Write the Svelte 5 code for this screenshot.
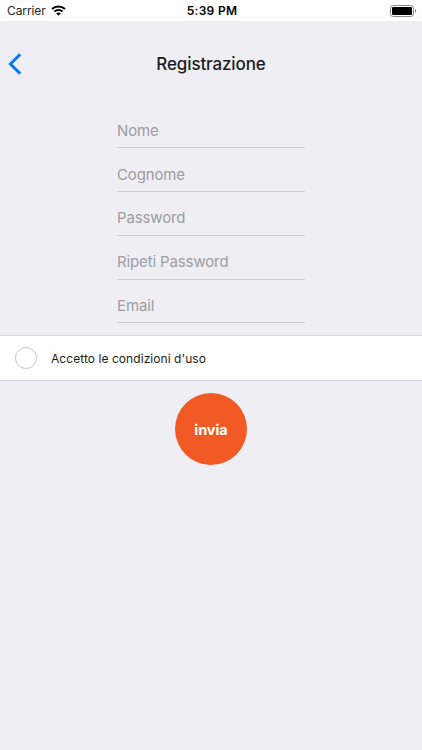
<script lang="ts">
	type Field = { name: string; label: string; type: 'text' | 'password' | 'email' };

	const fields: Field[] = [
		{ name: 'nome', label: 'Nome', type: 'text' },
		{ name: 'cognome', label: 'Cognome', type: 'text' },
		{ name: 'password', label: 'Password', type: 'password' },
		{ name: 'ripeti', label: 'Ripeti Password', type: 'password' },
		{ name: 'email', label: 'Email', type: 'email' }
	];

	let values = $state<Record<string, string>>({
		nome: '',
		cognome: '',
		password: '',
		ripeti: '',
		email: ''
	});
	let accepted = $state(false);

	function submit(e: SubmitEvent) {
		e.preventDefault();
	}
</script>

<div class="screen">
	<div class="status">
		<div class="carrier">
			<span>Carrier</span>
			<svg width="15" height="11" viewBox="0 0 15 11" fill="none" stroke="#000" stroke-width="2">
				<path d="M1 4.1C4.7.6 10.3.6 14 4.1" />
				<path d="M3.4 6.6C5.8 4.4 9.2 4.4 11.6 6.6" />
				<path d="M7.5 10.7L5.1 8.3C6.5 7.1 8.5 7.1 9.9 8.3Z" fill="#000" stroke="none" />
			</svg>
		</div>
		<span class="time">5:39 PM</span>
		<svg class="battery" width="27" height="12" viewBox="0 0 27 12">
			<rect x="0.5" y="0.5" width="23" height="11" rx="2.7" fill="#fff" stroke="#8c8c8c" />
			<rect x="2" y="2" width="20" height="8" rx="1.1" fill="#000" />
			<path d="M25 4C26.6 4.5 26.6 7.5 25 8Z" fill="#8c8c8c" />
		</svg>
	</div>

	<header class="nav">
		<button class="back" type="button" aria-label="Indietro">
			<svg width="14" height="22" viewBox="0 0 14 22" fill="none" stroke="#0b79ee" stroke-width="2.9">
				<path d="M12.2 1.4L2.4 11L12.2 20.6" />
			</svg>
		</button>
		<h1>Registrazione</h1>
	</header>

	<form onsubmit={submit}>
		<div class="fields">
			{#each fields as field (field.name)}
				<input
					type={field.type}
					name={field.name}
					placeholder={field.label}
					aria-label={field.label}
					bind:value={values[field.name]}
				/>
			{/each}
		</div>

		<label class="terms">
			<input type="checkbox" bind:checked={accepted} />
			<span>Accetto le condizioni d'uso</span>
		</label>

		<button class="send" type="submit">invia</button>
	</form>
</div>

<style>
	:global(body) {
		background: #efeef4;
	}

	.screen {
		height: 750px;
		overflow: hidden;
		background: #efeef4;
		font-family: Inter, Roboto, sans-serif;
		color: #1c1c20;
	}

	.status {
		display: grid;
		grid-template-columns: 1fr auto 1fr;
		align-items: center;
		height: 21px;
		padding: 0 5px 0 7px;
		background: #fff;
		color: #000;
		font-size: 12px;
	}

	.carrier {
		display: flex;
		align-items: center;
		gap: 5px;
		color: #222;
		letter-spacing: -0.1px;
	}

	.time {
		font-weight: 600;
		letter-spacing: 0.3px;
	}

	.battery {
		justify-self: end;
	}

	.nav {
		display: grid;
		grid-template-columns: 40px 1fr 40px;
		align-items: center;
		height: 83.4px;
	}

	.back {
		display: flex;
		padding: 2px 0 0 8px;
		border: none;
		background: none;
		cursor: pointer;
	}

	h1 {
		margin: 0;
		padding-top: 2px;
		font-size: 17px;
		font-weight: 500;
		letter-spacing: -0.13px;
		text-align: center;
	}

	form {
		display: flex;
		flex-direction: column;
		align-items: center;
	}

	.fields {
		display: flex;
		flex-direction: column;
		width: 188px;
		height: 230.6px;
	}

	.fields input {
		box-sizing: border-box;
		width: 100%;
		height: 43.8px;
		padding: 9px 0 0;
		border: none;
		border-bottom: 1px solid #cdcdd2;
		border-radius: 0;
		outline: none;
		background: none;
		font: inherit;
		font-size: 15px;
		letter-spacing: -0.13px;
	}

	.fields input::placeholder {
		color: #9c9ca1;
	}

	.terms {
		box-sizing: border-box;
		display: flex;
		align-items: center;
		gap: 14px;
		width: 100%;
		height: 46px;
		padding-left: 15px;
		border: solid #d8d8dc;
		border-width: 1px 0;
		background: #fff;
		font-size: 12px;
		letter-spacing: 0.06px;
	}

	.terms span {
		padding-top: 1px;
	}

	.terms input {
		appearance: none;
		box-sizing: border-box;
		width: 22px;
		height: 22px;
		margin: 0;
		border: 1px solid #c8c8cc;
		border-radius: 50%;
	}

	.terms input:checked {
		border: 6px solid #f15a24;
	}

	.send {
		width: 72px;
		height: 72px;
		margin-top: 12px;
		padding: 1px 0 0;
		border: none;
		border-radius: 50%;
		background: #f15a24;
		color: #fff;
		font: inherit;
		font-size: 14.5px;
		font-weight: 700;
		letter-spacing: -0.1px;
		cursor: pointer;
	}
</style>
